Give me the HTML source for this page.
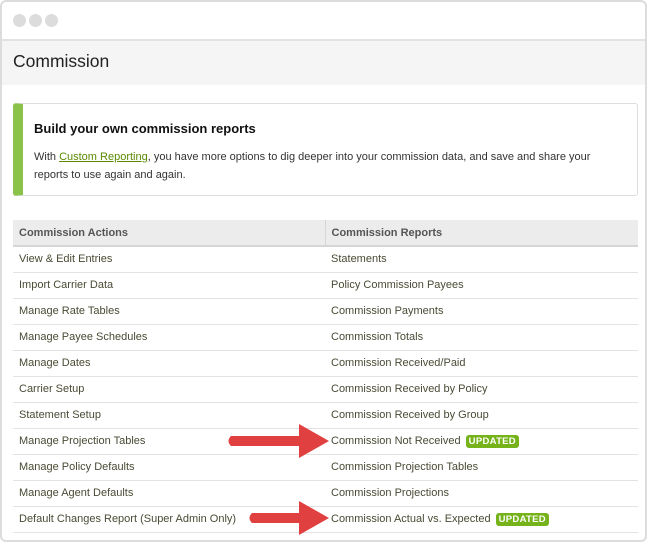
<!DOCTYPE html>
<html><head><style>
*{margin:0;padding:0;box-sizing:border-box}
body{width:647px;height:540px;background:#fff;font-family:"Liberation Sans",sans-serif;overflow:hidden;position:relative}
.win{position:absolute;left:0;top:0;width:647px;height:542px;border:2px solid #dcdcdc;border-radius:6px;background:#fff}
.dot{position:absolute;top:12px;width:13px;height:13px;border-radius:50%;background:#dcdcdc}
.hdr{position:absolute;left:0;top:37px;width:643px;height:46px;background:#f5f5f5;border-top:2px solid #e2e2e2}
.hdr span{position:absolute;left:11px;top:10px;font-size:17.5px;color:#222}
.call{position:absolute;left:11px;top:101px;width:625px;height:93px;border:1px solid #ddd;border-left:10px solid #8bc34a;border-radius:3px}
.call h3{position:absolute;left:11px;top:17px;font-size:13px;color:#111}
.call p{position:absolute;left:11px;top:44px;width:565px;font-size:11px;line-height:18px;color:#333}
.call a{color:#5a8a00;text-decoration:underline}
table{position:absolute;left:11px;top:218px;width:625px;border-collapse:collapse;font-size:11px}
th{background:#ececec;color:#555;text-align:left;font-weight:bold;height:26px;padding-left:6px;border-bottom:2px solid #d6d6d6}
th+th{border-left:1px solid #d6d6d6}
td{height:26px;padding-left:6px;color:#4a4a35;border-bottom:1px solid #e2e2e2}
td:first-child{width:312px}
.up{display:inline-block;background:#76b21a;color:#fff;font-size:9.5px;font-weight:bold;padding:1px 3px;border-radius:3px;margin-left:2px;letter-spacing:.3px}
</style></head><body>
<div class="win">
<div class="dot" style="left:11px"></div><div class="dot" style="left:27px"></div><div class="dot" style="left:43px"></div>
<div class="hdr"><span>Commission</span></div>
<div class="call"><h3>Build your own commission reports</h3><p>With <a>Custom Reporting</a>, you have more options to dig deeper into your commission data, and save and share your reports to use again and again.</p></div>
<table>
<tr><th>Commission Actions</th><th>Commission Reports</th></tr>
<tr><td>View &amp; Edit Entries</td><td>Statements</td></tr>
<tr><td>Import Carrier Data</td><td>Policy Commission Payees</td></tr>
<tr><td>Manage Rate Tables</td><td>Commission Payments</td></tr>
<tr><td>Manage Payee Schedules</td><td>Commission Totals</td></tr>
<tr><td>Manage Dates</td><td>Commission Received/Paid</td></tr>
<tr><td>Carrier Setup</td><td>Commission Received by Policy</td></tr>
<tr><td>Statement Setup</td><td>Commission Received by Group</td></tr>
<tr><td>Manage Projection Tables</td><td>Commission Not Received <span class="up">UPDATED</span></td></tr>
<tr><td>Manage Policy Defaults</td><td>Commission Projection Tables</td></tr>
<tr><td>Manage Agent Defaults</td><td>Commission Projections</td></tr>
<tr><td>Default Changes Report (Super Admin Only)</td><td>Commission Actual vs. Expected <span class="up">UPDATED</span></td></tr>
</table>
</div>
<svg style="position:absolute;left:0;top:0" width="647" height="540">
<g fill="#e04040">
<path d="M231 436 L299 436 L299 424 L329 441 L299 458 L299 446 L231 446 Q226 441 231 436Z"/>
<path d="M252 513 L299 513 L299 501 L329 518 L299 535 L299 523 L252 523 Q247 518 252 513Z"/>
</g></svg>
</body></html>
